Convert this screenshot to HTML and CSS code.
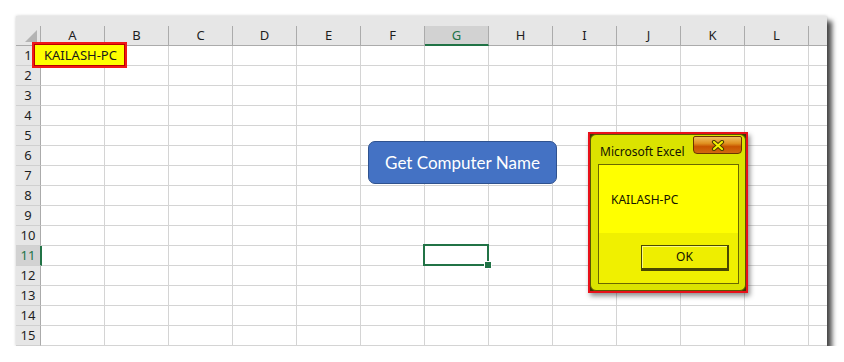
FILE: index.html
```html
<!DOCTYPE html>
<html lang="en">
<head>
    <meta charset="UTF-8">
    <title>Get Computer Name</title>
    <link rel="stylesheet" href="styles.css">
</head>
<body>
    <div class="sheet">
        <div class="col-headers">
            <div class="corner"></div>
            <div class="col-head">A</div>
            <div class="col-head">B</div>
            <div class="col-head">C</div>
            <div class="col-head">D</div>
            <div class="col-head">E</div>
            <div class="col-head">F</div>
            <div class="col-head active">G</div>
            <div class="col-head">H</div>
            <div class="col-head">I</div>
            <div class="col-head">J</div>
            <div class="col-head">K</div>
            <div class="col-head">L</div>
            <div class="col-head last"></div>
        </div>

        <div class="row"><div class="row-head">1</div><span></span><span></span><span></span><span></span><span></span><span></span><span></span><span></span><span></span><span></span><span></span><span></span><span></span></div>
        <div class="row"><div class="row-head">2</div><span></span><span></span><span></span><span></span><span></span><span></span><span></span><span></span><span></span><span></span><span></span><span></span><span></span></div>
        <div class="row"><div class="row-head">3</div><span></span><span></span><span></span><span></span><span></span><span></span><span></span><span></span><span></span><span></span><span></span><span></span><span></span></div>
        <div class="row"><div class="row-head">4</div><span></span><span></span><span></span><span></span><span></span><span></span><span></span><span></span><span></span><span></span><span></span><span></span><span></span></div>
        <div class="row"><div class="row-head">5</div><span></span><span></span><span></span><span></span><span></span><span></span><span></span><span></span><span></span><span></span><span></span><span></span><span></span></div>
        <div class="row"><div class="row-head">6</div><span></span><span></span><span></span><span></span><span></span><span></span><span></span><span></span><span></span><span></span><span></span><span></span><span></span></div>
        <div class="row"><div class="row-head">7</div><span></span><span></span><span></span><span></span><span></span><span></span><span></span><span></span><span></span><span></span><span></span><span></span><span></span></div>
        <div class="row"><div class="row-head">8</div><span></span><span></span><span></span><span></span><span></span><span></span><span></span><span></span><span></span><span></span><span></span><span></span><span></span></div>
        <div class="row"><div class="row-head">9</div><span></span><span></span><span></span><span></span><span></span><span></span><span></span><span></span><span></span><span></span><span></span><span></span><span></span></div>
        <div class="row"><div class="row-head">10</div><span></span><span></span><span></span><span></span><span></span><span></span><span></span><span></span><span></span><span></span><span></span><span></span><span></span></div>
        <div class="row"><div class="row-head active">11</div><span></span><span></span><span></span><span></span><span></span><span></span><span></span><span></span><span></span><span></span><span></span><span></span><span></span></div>
        <div class="row"><div class="row-head">12</div><span></span><span></span><span></span><span></span><span></span><span></span><span></span><span></span><span></span><span></span><span></span><span></span><span></span></div>
        <div class="row"><div class="row-head">13</div><span></span><span></span><span></span><span></span><span></span><span></span><span></span><span></span><span></span><span></span><span></span><span></span><span></span></div>
        <div class="row"><div class="row-head">14</div><span></span><span></span><span></span><span></span><span></span><span></span><span></span><span></span><span></span><span></span><span></span><span></span><span></span></div>
        <div class="row"><div class="row-head">15</div><span></span><span></span><span></span><span></span><span></span><span></span><span></span><span></span><span></span><span></span><span></span><span></span><span></span></div>

        <!-- things floating over the grid -->
        <div class="name-cell">KAILASH-PC</div>

        <button class="macro-button">Get Computer Name</button>

        <div class="selection"><div class="fill-handle"></div></div>

        <div class="msgbox">
            <div class="msgbox-frame">
                <div class="msgbox-title">
                    <span>Microsoft Excel</span>
                    <div class="msgbox-close">
                        <svg width="14" height="11" viewBox="0 0 14 11">
                            <path d="M3 2 L11 9 M11 2 L3 9" stroke="#4a3a00" stroke-width="4.2" stroke-linecap="round"/>
                            <path d="M3 2 L11 9 M11 2 L3 9" stroke="#f4f000" stroke-width="2.2" stroke-linecap="round"/>
                        </svg>
                    </div>
                </div>
                <div class="msgbox-body">
                    <div class="msgbox-text">KAILASH-PC</div>
                    <div class="msgbox-actions">
                        <div class="msgbox-ok">OK</div>
                    </div>
                </div>
            </div>
        </div>
    </div>
</body>
</html>
```

FILE: styles.css
```css
body {
    margin: 0;
    background-color: #ffffff;
    font-family: "Noto Sans", "Liberation Sans", sans-serif;
}

.sheet {
    position: relative;
    width: 811px;
    margin: 16px 0 0 16px;
    background-color: #ffffff;
    box-shadow: 5px 5px 5px rgba(0, 0, 0, 0.7), 0 0 3px rgba(0, 0, 0, 0.2);
}

.col-headers,
.row {
    display: grid;
    grid-template-columns: 25px repeat(12, 64px) 18px;
}

.col-headers {
    height: 30px;
    background-color: #e6e6e6;
    border-bottom: 1px solid #ababab;
    box-sizing: border-box;
}

.corner {
    position: relative;
    border-right: 1px solid #ababab;
    margin-top: 10px;
}

.corner::after {
    content: "";
    position: absolute;
    right: 3px;
    bottom: 3px;
    border-style: solid;
    border-width: 0 0 12px 12px;
    border-color: transparent transparent #b4b4b4 transparent;
}

.col-head {
    margin-top: 10px;
    border-right: 1px solid #ababab;
    font-size: 13px;
    color: #1e1e1e;
    text-align: center;
    line-height: 19px;
}

.col-head.active {
    background-color: #d2d2d2;
    color: #217346;
    border-bottom: 2px solid #217346;
    margin-bottom: -1px;
    line-height: 18px;
}

.col-head.last {
    border-right: none;
}

.row {
    height: 20px;
}

.row > span {
    border-right: 1px solid #d4d4d4;
    border-bottom: 1px solid #d4d4d4;
}

.row > span:last-child {
    border-right: none;
}

.row-head {
    background-color: #e6e6e6;
    border-right: 1px solid #ababab;
    border-bottom: 1px solid #d0d0d0;
    font-size: 13px;
    color: #1e1e1e;
    text-align: center;
    line-height: 19px;
}

.row-head.active {
    background-color: #d2d2d2;
    color: #217346;
    border-right: 2px solid #217346;
    margin-right: -1px;
    position: relative;
}

.name-cell {
    position: absolute;
    left: 16px;
    top: 26px;
    width: 95px;
    height: 26px;
    box-sizing: border-box;
    border: 2px solid #f01818;
    box-shadow: inset 0 0 0 1px #b80000;
    background-color: #ffff00;
    font-size: 13px;
    color: #1a1a1a;
    line-height: 22px;
    padding-left: 10px;
}

.macro-button {
    position: absolute;
    left: 352px;
    top: 125px;
    width: 189px;
    height: 43px;
    background-color: #4472c4;
    border: 1px solid #2f528f;
    border-radius: 7px;
    color: #ffffff;
    font-family: Lato, "Open Sans", sans-serif;
    font-size: 17px;
    padding: 0;
}

.selection {
    position: absolute;
    left: 407px;
    top: 228px;
    width: 66px;
    height: 22px;
    box-sizing: border-box;
    border: 2px solid #217346;
}

.fill-handle {
    position: absolute;
    right: -5px;
    bottom: -5px;
    width: 6px;
    height: 6px;
    background-color: #217346;
    border: 1px solid #ffffff;
}

.msgbox {
    position: absolute;
    left: 572px;
    top: 116px;
    width: 160px;
    height: 161px;
    box-sizing: border-box;
    border: 2px solid #e8101a;
    background-color: #3e3a00;
    box-shadow: 2px 3px 5px rgba(0, 0, 0, 0.45);
}

.msgbox-frame {
    height: 100%;
    box-sizing: border-box;
    border: 1px solid #5a5600;
    border-radius: 6px;
    background-color: #dbe300;
    padding: 0 6px 6px 7px;
    display: flex;
    flex-direction: column;
}

.msgbox-title {
    height: 29px;
    display: flex;
    align-items: flex-start;
    font-size: 12px;
    color: #141400;
}

.msgbox-title span {
    padding: 8px 0 0 2px;
}

.msgbox-close {
    margin: 1px -3px 0 auto;
    width: 49px;
    height: 18px;
    box-sizing: border-box;
    border: 1px solid #6a3400;
    border-radius: 2px 2px 4px 4px;
    background: linear-gradient(to bottom, #f0c060 0%, #e09020 40%, #c85400 60%, #d06a10 100%);
    display: flex;
    align-items: center;
    justify-content: center;
}

.msgbox-body {
    flex: 1;
    border: 1px solid #6a6800;
    display: flex;
    flex-direction: column;
}

.msgbox-text {
    height: 68px;
    background-color: #ffff00;
    font-size: 12px;
    color: #141400;
    padding: 26px 0 0 12px;
    box-sizing: border-box;
}

.msgbox-actions {
    flex: 1;
    background-color: #f0f000;
    display: flex;
    justify-content: flex-end;
    align-items: flex-start;
    padding: 12px 9px 0 0;
}

.msgbox-ok {
    width: 88px;
    height: 26px;
    box-sizing: border-box;
    border: 1px solid #4a4800;
    border-right-width: 2px;
    border-bottom-width: 3px;
    background-color: #eeee00;
    box-shadow: inset 1px 1px 0 #fbfb80;
    font-size: 12px;
    color: #141400;
    text-align: center;
    line-height: 21px;
}
```
